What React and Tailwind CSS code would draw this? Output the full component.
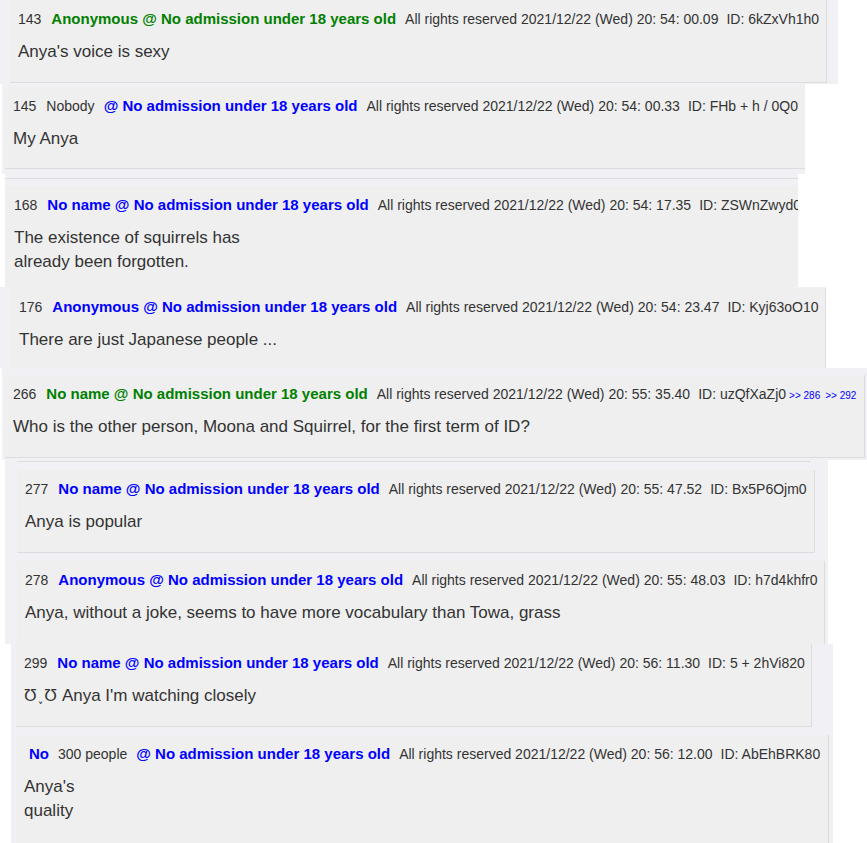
const NAME = 'No admission under 18 years old'

const posts = [
  {
    outer: 'ml-0 w-[838px] h-[84px] pl-[10px]',
    box: 'w-[817px] h-[83px] border-r border-b',
    no: '143', name: `Anonymous @ ${NAME}`, color: 'text-[#008000]',
    date: '2021/12/22 (Wed) 20: 54: 00.09', id: '6kZxVh1h0',
    body: ["Anya's voice is sexy"],
  },
  {
    outer: 'ml-[2px] w-[803px] h-[90px] pt-[3px] pl-[3px]',
    box: 'w-[800px] h-[82px] border-b',
    no: '145', plain: 'Nobody', name: `@ ${NAME}`, color: 'text-[#0000ff]',
    date: '2021/12/22 (Wed) 20: 54: 00.33', id: 'FHb + h / 0Q0',
    body: ['My Anya'],
  },
  {
    outer: 'ml-[5px] w-[793px] h-[113px] pt-[4px]',
    line: 'w-full',
    box: 'mt-[7px] ml-[1px] w-[792px] h-[101px]',
    no: '168', name: `No name @ ${NAME}`, color: 'text-[#0000ff]',
    date: '2021/12/22 (Wed) 20: 54: 17.35', id: 'ZSWnZwyd0',
    body: ['The existence of squirrels has', 'already been forgotten.'],
  },
  {
    outer: 'ml-0 w-[826px] h-[81px] pt-px pl-[11px]',
    box: 'w-[815px] h-[80px] border-r',
    no: '176', name: `Anonymous @ ${NAME}`, color: 'text-[#0000ff]',
    date: '2021/12/22 (Wed) 20: 54: 23.47', id: 'Kyj63oO10',
    body: ['There are just Japanese people ...'],
  },
  {
    outer: 'ml-[2px] w-[865px] h-[92px] pt-[7px] pl-[3px]',
    box: 'w-[860px] h-[83px] border-r border-b',
    no: '266', name: `No name @ ${NAME}`, color: 'text-[#008000]',
    date: '2021/12/22 (Wed) 20: 55: 35.40', id: 'uzQfXaZj0', links: ['286', '292'],
    body: ['Who is the other person, Moona and Squirrel, for the first term of ID?'],
  },
  {
    outer: 'ml-[5px] w-[823px] h-[93px] pt-px',
    line: 'ml-[12px] w-[793px]',
    box: 'mt-[8px] ml-[12px] w-[798px] h-[83px] border-r border-b',
    no: '277', name: `No name @ ${NAME}`, color: 'text-[#0000ff]',
    date: '2021/12/22 (Wed) 20: 55: 47.52', id: 'Bx5P6Ojm0',
    body: ['Anya is popular'],
  },
  {
    outer: 'ml-[5px] w-[823px] h-[91px] pt-[8px] pl-[12px]',
    box: 'w-[808px] h-[83px] border-r',
    no: '278', name: `Anonymous @ ${NAME}`, color: 'text-[#0000ff]',
    date: '2021/12/22 (Wed) 20: 55: 48.03', id: 'h7d4khfr0',
    body: ['Anya, without a joke, seems to have more vocabulary than Towa, grass'],
  },
  {
    outer: 'ml-[11px] w-[822px] h-[91px] pl-[5px]',
    box: 'w-[796px] h-[83px] border-r border-b',
    no: '299', name: `No name @ ${NAME}`, color: 'text-[#0000ff]',
    date: '2021/12/22 (Wed) 20: 56: 11.30', id: '5 + 2hVi820',
    emo: '\u01B1\u02EF\u01B1',
    body: ["Anya I'm watching closely"],
  },
  {
    outer: 'ml-[11px] w-[822px] h-[108px] pl-[5px]',
    box: 'w-[813px] h-[108px] border-r',
    lead: 'No', plain: '300 people', name: `@ ${NAME}`, color: 'text-[#0000ff]',
    date: '2021/12/22 (Wed) 20: 56: 12.00', id: 'AbEhBRK80',
    body: ["Anya's", 'quality'],
  },
]

function Post({ p }) {
  return (
    <div className={`${p.outer} bg-[#f0f0f5] shrink-0`}>
      {p.line && <div className={`${p.line} h-px bg-[#dcdcdc]`} />}
      <div className={`${p.box} bg-[#efefef] border-[#dcdcdc] overflow-hidden pt-[10px] pl-[8px]`}>
        <div className="flex items-baseline gap-[9px] whitespace-nowrap h-[18px] leading-[18px] text-[14px] text-[#333]">
          {p.no && <span className="mr-px">{p.no}</span>}
          {p.lead && <span className={`ml-[5px] font-bold text-[15px] ${p.color}`}>{p.lead}</span>}
          {p.plain && <span>{p.plain}</span>}
          <span className={`font-bold text-[15px] ${p.color}`}>{p.name}</span>
          <span>
            All rights reserved {p.date}
            <span className="ml-[8px]">ID: {p.id}</span>
            {p.links && (
              <span className="ml-[3px] text-[10px] text-[#0000ff]">
                {p.links.map(l => (
                  <span key={l} className="mr-[5px]">&gt;&gt; {l}</span>
                ))}
              </span>
            )}
          </span>
        </div>
        <div className="mt-[12px] text-[17px] leading-[24px] text-[#333]">
          {p.body.map((t, i) => (
            <div key={i}>
              {p.emo && i === 0 && <><span className="tracking-[1px]">{p.emo}</span>{' '}</>}
              {t}
            </div>
          ))}
        </div>
      </div>
    </div>
  )
}

export default function App() {
  return (
    <div className="w-[867px] h-[843px] overflow-hidden bg-white flex flex-col font-['Liberation_Sans',Arial,'DejaVu_Sans',sans-serif]">
      {posts.map((p, i) => <Post key={i} p={p} />)}
    </div>
  )
}
